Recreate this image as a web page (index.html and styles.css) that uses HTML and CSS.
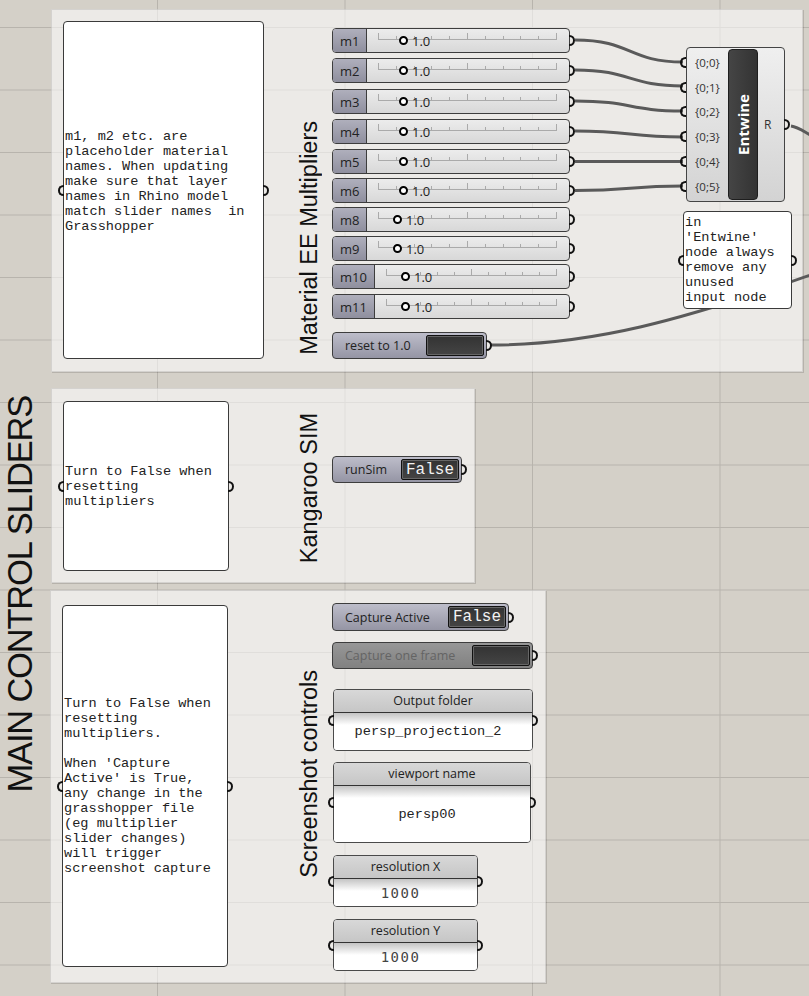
FILE: index.html
```html
<!doctype html>
<html>
  <head>
    <link rel="stylesheet" href="styles.css">
  </head>
  <body>
    <div class="canvas">
      <!-- groups -->
      <div class="group group-mult"></div>
      <div class="group group-kang"></div>
      <div class="group group-shot"></div>

      <!-- scribbles -->
      <div class="scribble title-main">MAIN CONTROL SLIDERS</div>
      <div class="scribble group-label label-mult">Material EE Multipliers</div>
      <div class="scribble group-label label-kang">Kangaroo SIM</div>
      <div class="scribble group-label label-shot">Screenshot controls</div>

      <!-- wires -->
      <svg class="wires" width="809" height="996" viewBox="0 0 809 996">
        <path d="M575,40 C632,40 628,62 683,62"/>
        <path d="M575,70 C632,70 628,86 683,86"/>
        <path d="M575,101 C632,101 628,111 683,111"/>
        <path d="M575,131 C632,131 628,137 683,137"/>
        <path d="M575,161.5 C632,161.5 628,161.5 683,161.5"/>
        <path d="M575,190.5 C632,190.5 628,186 683,186"/>
        <path d="M490,345 C590,345 680,322 830,268"/>
        <path d="M791,126 C798,127 803,131 812,136"/>
      </svg>

      <!-- notes -->
      <div class="note note-mult">m1, m2 etc. are
placeholder material
names. When updating
make sure that layer
names in Rhino model
match slider names  in
Grasshopper<span class="grip in"></span><span class="grip out"></span></div>

      <div class="note note-entwine">in
'Entwine'
node always
remove any
unused
input node<span class="grip in"></span><span class="grip out"></span></div>

      <div class="note note-kang">Turn to False when
resetting
multipliers<span class="grip in"></span><span class="grip out"></span></div>

      <div class="note note-shot">Turn to False when
resetting
multipliers.

When 'Capture
Active' is True,
any change in the
grasshopper file
(eg multiplier
slider changes)
will trigger
screenshot capture<span class="grip in"></span><span class="grip out"></span></div>

      <!-- sliders -->
      <div class="slider slider-m1">
        <div class="slider-name">m1</div>
        <div class="slider-body"><span class="track"></span><span class="knob"></span><span class="value">1.0</span></div>
        <span class="grip out"></span>
      </div>
      <div class="slider slider-m2">
        <div class="slider-name">m2</div>
        <div class="slider-body"><span class="track"></span><span class="knob"></span><span class="value">1.0</span></div>
        <span class="grip out"></span>
      </div>
      <div class="slider slider-m3">
        <div class="slider-name">m3</div>
        <div class="slider-body"><span class="track"></span><span class="knob"></span><span class="value">1.0</span></div>
        <span class="grip out"></span>
      </div>
      <div class="slider slider-m4">
        <div class="slider-name">m4</div>
        <div class="slider-body"><span class="track"></span><span class="knob"></span><span class="value">1.0</span></div>
        <span class="grip out"></span>
      </div>
      <div class="slider slider-m5">
        <div class="slider-name">m5</div>
        <div class="slider-body"><span class="track"></span><span class="knob"></span><span class="value">1.0</span></div>
        <span class="grip out"></span>
      </div>
      <div class="slider slider-m6">
        <div class="slider-name">m6</div>
        <div class="slider-body"><span class="track"></span><span class="knob"></span><span class="value">1.0</span></div>
        <span class="grip out"></span>
      </div>
      <div class="slider slider-m8">
        <div class="slider-name">m8</div>
        <div class="slider-body"><span class="track"></span><span class="knob knob-low"></span><span class="value">1.0</span></div>
        <span class="grip out"></span>
      </div>
      <div class="slider slider-m9">
        <div class="slider-name">m9</div>
        <div class="slider-body"><span class="track"></span><span class="knob knob-low"></span><span class="value">1.0</span></div>
        <span class="grip out"></span>
      </div>
      <div class="slider slider-m10">
        <div class="slider-name wide">m10</div>
        <div class="slider-body"><span class="track short"></span><span class="knob knob-wide"></span><span class="value">1.0</span></div>
        <span class="grip out"></span>
      </div>
      <div class="slider slider-m11">
        <div class="slider-name wide">m11</div>
        <div class="slider-body"><span class="track short"></span><span class="knob knob-wide"></span><span class="value">1.0</span></div>
        <span class="grip out"></span>
      </div>

      <div class="toggle button-reset">
        <span class="toggle-name">reset to 1.0</span>
        <span class="toggle-box"></span>
        <span class="grip out"></span>
      </div>

      <!-- entwine -->
      <div class="component entwine">
        <div class="comp-inputs">
          <div class="port">{0;0}<span class="grip in"></span></div>
          <div class="port">{0;1}<span class="grip in"></span></div>
          <div class="port">{0;2}<span class="grip in"></span></div>
          <div class="port">{0;3}<span class="grip in"></span></div>
          <div class="port">{0;4}<span class="grip in"></span></div>
          <div class="port">{0;5}<span class="grip in"></span></div>
        </div>
        <div class="comp-bar"><span>Entwine</span></div>
        <div class="comp-outputs">R</div>
        <span class="grip out"></span>
      </div>

      <!-- kangaroo -->
      <div class="toggle toggle-run">
        <span class="toggle-name">runSim</span>
        <span class="toggle-box">False</span>
        <span class="grip out"></span>
      </div>

      <!-- screenshot -->
      <div class="toggle toggle-capture">
        <span class="toggle-name">Capture Active</span>
        <span class="toggle-box">False</span>
        <span class="grip out"></span>
      </div>
      <div class="toggle button-frame disabled">
        <span class="toggle-name">Capture one frame</span>
        <span class="toggle-box"></span>
        <span class="grip out"></span>
      </div>

      <div class="param param-folder">
        <div class="param-head">Output folder</div>
        <div class="param-body">persp_projection_2</div>
        <span class="grip in"></span><span class="grip out"></span>
      </div>
      <div class="param param-viewport">
        <div class="param-head">viewport name</div>
        <div class="param-body">persp00</div>
        <span class="grip in"></span><span class="grip out"></span>
      </div>
      <div class="param param-resx">
        <div class="param-head">resolution X</div>
        <div class="param-body number">1000</div>
        <span class="grip in"></span><span class="grip out"></span>
      </div>
      <div class="param param-resy">
        <div class="param-head">resolution Y</div>
        <div class="param-body number">1000</div>
        <span class="grip in"></span><span class="grip out"></span>
      </div>
    </div>
  </body>
</html>
```

FILE: styles.css
```css
html, body {
  margin: 0;
  padding: 0;
  background: #d4d0c8;
}

.canvas {
  position: relative;
  width: 809px;
  height: 996px;
  overflow: hidden;
  font-family: "Open Sans", "Noto Sans", sans-serif;
  color: #222;
  background-color: #d4d0c8;
  background-image: linear-gradient(to bottom, #b8b4ad 1px, transparent 1px),
                    linear-gradient(to right, #b8b4ad 1px, transparent 1px);
  background-size: 100% 62.5px, 187.5px 100%;
  background-position: 0 27px, 157px 0;
}

/* groups */
.group {
  position: absolute;
  box-sizing: border-box;
  background: rgba(255, 255, 255, 0.56);
  border: 1px solid rgba(0, 0, 0, 0.1);
  box-shadow: 1px 1px 0 rgba(0, 0, 0, 0.14);
}

.group-mult { left: 51px; top: 9px; width: 752px; height: 363px; }
.group-kang { left: 51px; top: 388px; width: 424px; height: 195px; }
.group-shot { left: 50px; top: 590px; width: 496px; height: 393px; }

/* scribbles */
.scribble {
  position: absolute;
  font-family: "Liberation Sans", Arial, sans-serif;
  color: #111;
  white-space: nowrap;
  writing-mode: vertical-rl;
  transform: rotate(180deg);
}

.title-main {
  font-size: 34.5px;
  line-height: 36px;
  letter-spacing: -1.2px;
  left: 2px;
  bottom: 204px;
}

.group-label {
  font-size: 23.5px;
  line-height: 24px;
  left: 297px;
}

.label-mult { bottom: 641px; }
.label-kang { bottom: 433px; }
.label-shot { bottom: 118px; }

/* wires */
.wires {
  position: absolute;
  left: 0;
  top: 0;
}

.wires path {
  fill: none;
  stroke: #5a5a5a;
  stroke-width: 3;
}

/* grips */
.grip {
  position: absolute;
  top: 50%;
  width: 4px;
  height: 7px;
  margin-top: -5.5px;
  border: 2px solid #111;
}

.grip.in {
  left: -6px;
  border-right: 0;
  border-radius: 6px 0 0 6px;
}

.grip.out {
  right: -6px;
  border-left: 0;
  border-radius: 0 6px 6px 0;
}

/* notes */
.note {
  position: absolute;
  box-sizing: border-box;
  display: flex;
  align-items: center;
  padding-left: 1px;
  background: #fff;
  border: 1px solid #3a3a3a;
  border-radius: 4px;
  font-family: "Liberation Mono", "Courier New", monospace;
  font-size: 13.6px;
  line-height: 15px;
  color: #222;
  white-space: pre;
}

.note-mult { left: 63px; top: 21px; width: 201px; height: 338px; padding-bottom: 17px; }
.note-entwine { left: 683px; top: 211px; width: 109px; height: 98px; }
.note-kang { left: 63px; top: 401px; width: 166px; height: 170px; }
.note-shot { left: 62px; top: 605px; width: 166px; height: 362px; }

/* sliders */
.slider {
  position: absolute;
  left: 332px;
  width: 238px;
  height: 25px;
  box-sizing: border-box;
  display: flex;
  border: 1px solid #3d3d3d;
  border-radius: 4px;
  background: linear-gradient(#ececec, #d8d8d8);
}

.slider-m1 { top: 28px; }
.slider-m2 { top: 58px; }
.slider-m3 { top: 89px; }
.slider-m4 { top: 119px; }
.slider-m5 { top: 149px; }
.slider-m6 { top: 178px; }
.slider-m8 { top: 207px; }
.slider-m9 { top: 236px; }
.slider-m10 { top: 264px; }
.slider-m11 { top: 294px; }

.slider-name {
  width: 34px;
  box-sizing: border-box;
  padding-left: 7px;
  display: flex;
  align-items: center;
  font-size: 13px;
  background: linear-gradient(#afafbc, #8f8f9e);
  border-right: 1px solid #3d3d3d;
  border-radius: 3px 0 0 3px;
}

.slider-name.wide {
  width: 42px;
}

.slider-body {
  flex: 1;
  position: relative;
  display: flex;
  align-items: center;
}

.track {
  position: absolute;
  left: 11px;
  top: 4px;
  width: 179px;
  height: 6px;
  border-bottom: 1px solid #aaa;
  background-image: repeating-linear-gradient(to right, #aaa 0 1px, transparent 1px 17.8px),
                    repeating-linear-gradient(to right, #aaa 0 1px, transparent 1px 89px);
  background-size: 100% 3px, 100% 6px;
  background-position: left bottom;
  background-repeat: no-repeat;
}

.track.short {
  width: 171px;
  background-image: repeating-linear-gradient(to right, #aaa 0 1px, transparent 1px 17px),
                    repeating-linear-gradient(to right, #aaa 0 1px, transparent 1px 85px);
}

.knob {
  position: relative;
  width: 5px;
  height: 5px;
  margin-left: 32px;
  border: 2px solid #000;
  border-radius: 50%;
  background: #fff;
}

.knob.knob-low { margin-left: 26px; }
.knob.knob-wide { margin-left: 26px; }

.value {
  position: relative;
  margin-left: 4px;
  font-size: 13px;
}

/* toggles and buttons */
.toggle {
  position: absolute;
  left: 332px;
  box-sizing: border-box;
  display: flex;
  align-items: stretch;
  justify-content: space-between;
  padding: 2px;
  border: 1px solid #3d3d3d;
  border-radius: 4px;
  background: linear-gradient(#bdbdca, #9595a4);
}

.toggle-name {
  display: flex;
  align-items: center;
  padding-left: 10px;
  font-size: 12.5px;
}

.toggle-box {
  width: 58px;
  box-sizing: border-box;
  background: linear-gradient(#333, #444);
  border: 1px solid #111;
  border-radius: 2px;
  box-shadow: inset 0 0 0 1px #666;
  color: #f2f2f2;
  font-family: "Liberation Mono", "Courier New", monospace;
  font-size: 16px;
  line-height: 20px;
  text-align: center;
}

.button-reset { top: 332px; width: 155px; height: 27px; }
.toggle-run { top: 456px; width: 130px; height: 27px; }
.toggle-capture { top: 603px; width: 177px; height: 28px; }
.button-frame { top: 642px; width: 201px; height: 27px; }

.toggle.disabled {
  background: linear-gradient(#979797, #818181);
}

.toggle.disabled .toggle-name {
  color: #646464;
}

/* entwine component */
.component {
  position: absolute;
  box-sizing: border-box;
  display: flex;
  border: 1px solid #444;
  border-radius: 4px;
  background: linear-gradient(#efefef, #d3d3d3);
  font-size: 11.5px;
  color: #333;
}

.entwine { left: 686px; top: 47px; width: 99px; height: 155px; }

.comp-inputs {
  width: 41px;
  padding-top: 2px;
}

.port {
  position: relative;
  height: 24.8px;
  display: flex;
  align-items: center;
  padding-left: 8px;
}

.port .grip.in {
  left: -7px;
}

.comp-bar {
  width: 30px;
  margin: 1px 0;
  box-sizing: border-box;
  display: flex;
  align-items: center;
  justify-content: center;
  background: linear-gradient(to right, #454545, #333);
  border: 1px solid #1e1e1e;
  border-radius: 4px;
}

.comp-bar span {
  writing-mode: vertical-rl;
  transform: rotate(180deg);
  color: #fff;
  font-weight: bold;
  font-size: 15px;
}

.comp-outputs {
  flex: 1;
  display: flex;
  align-items: center;
  padding-left: 6px;
  font-size: 12px;
}

/* parameter panels */
.param {
  position: absolute;
  left: 333px;
  box-sizing: border-box;
  display: flex;
  flex-direction: column;
  border: 1px solid #4a4a4a;
  border-radius: 4px;
  background: #fff;
}

.param-head {
  height: 22px;
  line-height: 22px;
  text-align: center;
  font-size: 12.5px;
  background: linear-gradient(#d8d8d8, #c6c6c6);
  border-bottom: 1px solid #333;
  border-radius: 3px 3px 0 0;
}

.param-body {
  flex: 1;
  display: flex;
  align-items: center;
  justify-content: center;
  padding-right: 10px;
  background: linear-gradient(#c4c4c4, #fff 12px);
  border-radius: 0 0 3px 3px;
  font-family: "Liberation Mono", "Courier New", monospace;
  font-size: 13.6px;
  color: #222;
}

.param-body.number {
  font-family: "DejaVu Sans Mono", monospace;
  font-size: 14px;
  letter-spacing: 1.5px;
  color: #444;
}

.param-folder { top: 689px; width: 200px; height: 62px; }
.param-viewport { top: 762px; width: 198px; height: 81px; }
.param-resx { top: 855px; width: 145px; height: 52px; }
.param-resy { top: 919px; width: 145px; height: 52px; }
```
